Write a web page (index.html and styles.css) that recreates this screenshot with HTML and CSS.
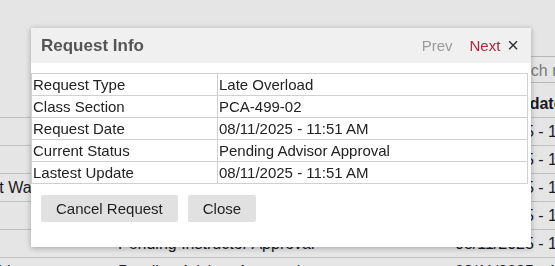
FILE: index.html
```html
<!DOCTYPE html>
<html>
<head>
<meta charset="utf-8">
<link rel="stylesheet" href="styles.css">
</head>
<body>
<div class="page">
  <div class="toolbar">
    <div class="search">Search requests</div>
  </div>
  <table class="list">
    <colgroup><col class="c1"><col class="c2"><col class="c3"></colgroup>
    <thead>
      <tr><th></th><th></th><th class="hdate">Last Update</th></tr>
    </thead>
    <tbody>
      <tr><td>Audit</td><td>Pending Advisor Approval</td><td>08/11/2025 - 11:51 AM</td></tr>
      <tr><td>Audit</td><td>Pending Advisor Approval</td><td>08/11/2025 - 11:51 AM</td></tr>
      <tr><td>Wait List Waiver</td><td>Pending Advisor Approval</td><td>08/11/2025 - 11:51 AM</td></tr>
      <tr><td>Audit</td><td>Pending Advisor Approval</td><td>08/11/2025 - 11:51 AM</td></tr>
      <tr><td>Audit</td><td>Pending Instructor Approval</td><td>08/11/2025 - 11:51 AM</td></tr>
      <tr><td>Late Subject</td><td>Pending Advisor Approval</td><td>08/11/2025 - 11:51 AM</td></tr>
    </tbody>
  </table>
</div>
<div class="overlay"></div>
<div class="dialog">
  <div class="dlg-head">
    <div class="dlg-title">Request Info</div>
    <div class="dlg-nav">
      <span class="prev">Prev</span>
      <span class="next">Next</span>
      <span class="close-x">×</span>
    </div>
  </div>
  <div class="dlg-body">
    <table class="info">
      <colgroup><col class="k"><col></colgroup>
      <tr><td>Request Type</td><td>Late Overload</td></tr>
      <tr><td>Class Section</td><td>PCA-499-02</td></tr>
      <tr><td>Request Date</td><td>08/11/2025 - 11:51 AM</td></tr>
      <tr><td>Current Status</td><td>Pending Advisor Approval</td></tr>
      <tr><td>Lastest Update</td><td>08/11/2025 - 11:51 AM</td></tr>
    </table>
    <div class="actions">
      <button class="btn">Cancel Request</button>
      <button class="btn">Close</button>
    </div>
  </div>
</div>
</body>
</html>
```
FILE: styles.css
```css
html, body {
  margin: 0;
  padding: 0;
  width: 555px;
  height: 266px;
  overflow: hidden;
  background: #ffffff;
  font-family: "Liberation Sans", Arial, sans-serif;
}
.page {
  width: 555px;
  height: 266px;
  overflow: hidden;
}
.toolbar {
  display: flex;
  padding-top: 56px;
  padding-left: 493px;
}
.search {
  box-sizing: border-box;
  height: 27px;
  width: 200px;
  flex: none;
  border: 1px solid #cfcfcf;
  color: #8a8a8a;
  font-size: 16px;
  line-height: 27px;
  padding-left: 3px;
  white-space: nowrap;
}
.list {
  margin-top: 7px;
  margin-left: -57px;
  width: 900px;
  table-layout: fixed;
  border-collapse: collapse;
  font-size: 16px;
  color: #1c1c28;
}
.list col.c1 { width: 175px; }
.list col.c2 { width: 337px; }
.list col.c3 { width: 388px; }
.list th, .list td {
  height: 27px;
  padding: 0;
  text-align: left;
  white-space: nowrap;
  overflow: hidden;
  border-bottom: 1px solid #d6d6d6;
}
.list th { font-weight: bold; }
.list th.hdate { padding-left: 16px; }
.overlay {
  position: fixed;
  inset: 0;
  background: rgba(0, 0, 0, 0.1);
}
.dialog {
  position: fixed;
  left: 31px;
  top: 28px;
  width: 500px;
  height: 219px;
  background: #ffffff;
  box-shadow: 0 1px 6px rgba(0, 0, 0, 0.3);
}
.dlg-head {
  height: 35px;
  background: #f0f0f0;
  display: flex;
  align-items: center;
  justify-content: space-between;
  padding: 0 12px 0 10px;
}
.dlg-title {
  font-weight: bold;
  font-size: 17px;
  color: #555555;
}
.dlg-nav {
  display: flex;
  align-items: center;
  font-size: 15px;
}
.prev { color: #9a9a9a; margin-right: 17px; }
.next { color: #b0283a; margin-right: 7px; }
.close-x { color: #333333; font-size: 20px; line-height: 15px; }
.dlg-body {
  padding-top: 10px;
}
.info {
  width: 497px;
  border-collapse: collapse;
  table-layout: fixed;
  font-size: 15px;
  color: #222222;
}
.info col.k { width: 186px; }
.info td {
  border: 1px solid #d0d0d0;
  height: 21px;
  padding: 0 1px;
  line-height: 19px;
  white-space: nowrap;
}
.actions {
  display: flex;
  gap: 10px;
  padding: 11px 0 0 10px;
}
.btn {
  font-family: "Liberation Sans", Arial, sans-serif;
  font-size: 15px;
  color: #1e1e1e;
  background: #e1e1e1;
  border: none;
  border-radius: 2px;
  height: 27px;
  padding: 0 15px;
  line-height: 27px;
}
```
